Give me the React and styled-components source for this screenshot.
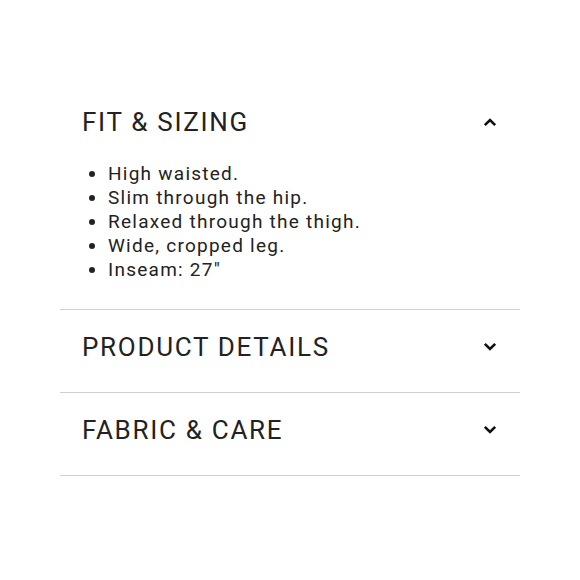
import React from "react";
import styled, { createGlobalStyle } from "styled-components";

const Global = createGlobalStyle`
  body {
    margin: 0;
    background: #fff;
    font-family: Roboto, "Liberation Sans", sans-serif;
    color: #222;
  }
`;

const Page = styled.div`
  width: 580px;
  height: 580px;
  padding: 87px 60px 0;
  box-sizing: border-box;
`;

const Section = styled.div`
  border-bottom: ${(p) => (p.$last ? "1px solid #d0d0d0" : "none")};
  border-top: ${(p) => (p.$first ? "none" : "1px solid #d0d0d0")};
`;

const Header = styled.div`
  display: flex;
  align-items: center;
  justify-content: space-between;
  height: 70px;
  padding: 0 23px 0 22px;
  margin-top: ${(p) => (p.$first ? "0" : "2px")};
  margin-bottom: ${(p) => (p.$first ? "0" : "10px")};
`;

const Title = styled.h2`
  margin: 0;
  font-size: 26px;
  font-weight: 400;
  letter-spacing: 1.7px;
  color: #222;
`;

const List = styled.ul`
  margin: 0;
  padding: 5px 0 27px 48px;
  font-size: 19px;
  line-height: 24px;
  letter-spacing: 1.25px;
  color: #222;
`;

const Chevron = ({ up }) => (
  <svg width="14" height="10" viewBox="0 0 14 10">
    <path
      d={up ? "M1.8 8.2 L7 3 L12.2 8.2" : "M1.8 1.8 L7 7 L12.2 1.8"}
      fill="none"
      stroke="#111"
      strokeWidth="2.6"
    />
  </svg>
);

const items = [
  "High waisted.",
  "Slim through the hip.",
  "Relaxed through the thigh.",
  "Wide, cropped leg.",
  'Inseam: 27"',
];

export default function App() {
  return (
    <>
      <Global />
      <Page>
        <Section $first>
          <Header $first>
            <Title>FIT &amp; SIZING</Title>
            <Chevron up />
          </Header>
          <List>
            {items.map((t) => (
              <li key={t}>{t}</li>
            ))}
          </List>
        </Section>
        <Section>
          <Header>
            <Title>PRODUCT DETAILS</Title>
            <Chevron />
          </Header>
        </Section>
        <Section $last>
          <Header>
            <Title>FABRIC &amp; CARE</Title>
            <Chevron />
          </Header>
        </Section>
      </Page>
    </>
  );
}
